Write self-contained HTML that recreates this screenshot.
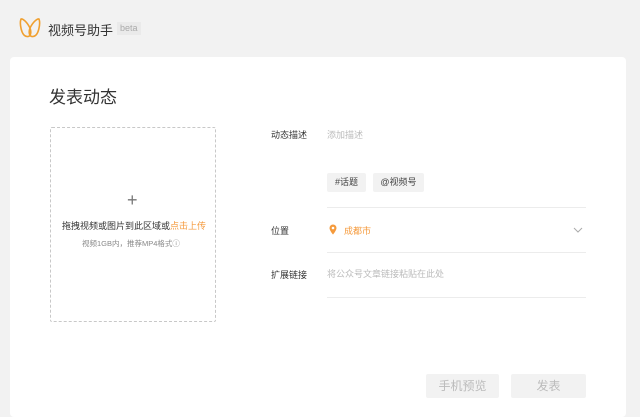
<!DOCTYPE html><html><head><meta charset="utf-8"><style>
*{margin:0;padding:0;box-sizing:border-box}
body{width:640px;height:411px;background:#f2f2f2;font-family:"Liberation Sans","Noto Sans CJK SC",sans-serif;position:relative;overflow:hidden;color:#333}
.a{position:absolute;white-space:nowrap}
.card{position:absolute;left:10px;top:57px;width:616px;height:360px;background:#fff;border-radius:4px}
.up{position:absolute;left:50px;top:127px;width:166px;height:195px;border:1px dashed #c8c8c8;border-radius:2px}
.ln{position:absolute;left:327px;width:259px;height:1px;background:#ececec}
.tag{position:absolute;top:173px;height:19px;background:#f2f2f2;font-size:9px;line-height:19px;text-align:center;color:#444;border-radius:2px}
.btn{position:absolute;top:374px;height:24px;background:#f2f2f2;color:#bbb;font-size:12px;line-height:24px;text-align:center;border-radius:2px}
</style></head><body>
<svg class="a" style="left:19px;top:17px" width="22" height="22" viewBox="0 0 22 22"><path d="M11 11C8 5 4 1.5 2 2C0.5 6 2 19 8 19.5C12 20 12.5 15 11 11C9.5 15 10 20 14 19.5C20 19 21.5 6 20 2C18 1.5 14 5 11 11Z" fill="none" stroke="#f0a030" stroke-width="1.6" stroke-linejoin="round"/></svg>
<div class="a" style="left:48px;top:20px;font-size:13px;color:#333">视频号助手</div>
<div class="a" style="left:117px;top:22px;font-size:9px;color:#aaa;background:#eaeaea;padding:1px 3px;line-height:11px">beta</div>
<div class="card"></div>
<div class="a" style="left:49px;top:83px;font-size:17px;color:#333">发表动态</div>
<div class="up"></div>
<div class="a" style="left:127px;top:190px;font-size:18px;color:#777;font-weight:300">+</div>
<div class="a" style="left:62px;top:219px;font-size:9px;color:#333">拖拽视频或图片到此区域或<span style="color:#f59a3c">点击上传</span></div>
<div class="a" style="left:82px;top:238px;font-size:7.5px;color:#888">视频1GB内，推荐MP4格式ⓘ</div>
<div class="a" style="left:271px;top:128px;font-size:9px">动态描述</div>
<div class="a" style="left:327px;top:128px;font-size:9px;color:#bbb">添加描述</div>
<div class="tag" style="left:327px;width:39px">#话题</div>
<div class="tag" style="left:373px;width:51px">@视频号</div>
<div class="ln" style="top:207px"></div>
<div class="a" style="left:271px;top:224px;font-size:9px">位置</div>
<svg class="a" style="left:329px;top:224px" width="8" height="11" viewBox="0 0 8 11"><path d="M4 0.5A3.5 3.5 0 0 1 7.5 4C7.5 6.5 4 10.5 4 10.5C4 10.5 0.5 6.5 0.5 4A3.5 3.5 0 0 1 4 0.5Z" fill="#f59a3c"/><circle cx="4" cy="4" r="1.3" fill="#fff"/></svg>
<div class="a" style="left:344px;top:224px;font-size:9px;color:#f59a3c">成都市</div>
<svg class="a" style="left:573px;top:227px" width="10" height="6" viewBox="0 0 10 6"><path d="M1 1L5 5L9 1" fill="none" stroke="#aaa" stroke-width="1"/></svg>
<div class="ln" style="top:252px"></div>
<div class="a" style="left:271px;top:268px;font-size:9px">扩展链接</div>
<div class="a" style="left:327px;top:267px;font-size:9px;color:#bbb">将公众号文章链接粘贴在此处</div>
<div class="ln" style="top:297px"></div>
<div class="btn" style="left:426px;width:73px">手机预览</div>
<div class="btn" style="left:511px;width:75px">发表</div>
</body></html>
